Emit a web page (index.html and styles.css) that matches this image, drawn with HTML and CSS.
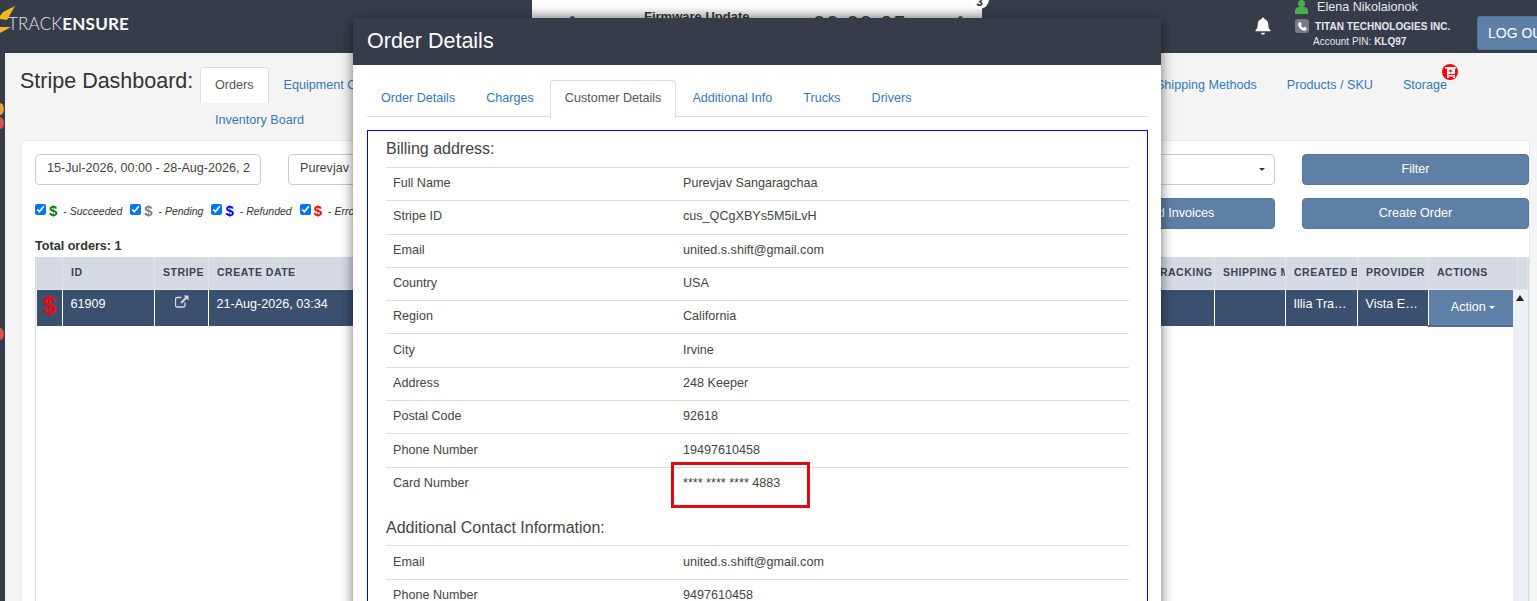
FILE: index.html
```html
<!DOCTYPE html>
<html lang="en">
<head>
    <meta charset="UTF-8">
    <title>Stripe Dashboard</title>
    <link rel="stylesheet" href="styles.css">
</head>
<body>
    <header class="topbar">
        <div class="logo">
            <svg class="logo-mark" width="16" height="34" viewBox="0 0 16 34"><path d="M15 0 L3 6 L0 10 L0 13 L7 14 Z" fill="#f5b81e"/><path d="M0 21 L11 21 L0 27 Z" fill="#f5b81e"/></svg>
            <span class="logo-text"><span class="logo-light">TRACK</span><b>ENSURE</b></span>
        </div>
        <div class="topbar-right">
            <svg class="bell" width="18" height="18" viewBox="0 0 18 18"><path d="M9 0.5a1.5 1.5 0 0 1 1.4 1.6c2.6.6 3.9 2.8 3.9 5.6 0 3 .8 4.300 2.200 5.600v1H1.500v-1c1.400-1.300 2.200-2.600 2.200-5.600 0-2.800 1.300-5 3.900-5.600A1.500 1.500 0 0 1 9 .5z" fill="#fff"/><path d="M7 15.700h4a2 2 0 0 1-4 0z" fill="#fff"/></svg>
            <div class="user">
                <div class="user-name">
                    <svg width="13" height="14" viewBox="0 0 13 14"><circle cx="6.500" cy="3.500" r="3.500" fill="#4cae4c"/><path d="M0 14v-3c0-2.500 2-4 3.500-4h6c1.500 0 3.500 1.500 3.500 4v3z" fill="#4cae4c"/></svg>
                    <span>Elena Nikolaionok</span>
                </div>
                <div class="user-company">
                    <span class="phone-icon"><svg width="9" height="9" viewBox="0 0 9 9"><path d="M1 .5 2.600 0l1.200 2.400-1 .8c.4 1.200 1.300 2.100 2.500 2.600l.9-1L8.800 6 8.300 7.800C7.800 8.600 7 9 6 8.800 3.200 8.200.8 5.800.2 3 0 2 .3 1.100 1 .5z" fill="#fff"/></svg></span>
                    <span>TITAN TECHNOLOGIES INC.</span>
                </div>
                <div class="user-pin">Account PIN: <b>KLQ97</b></div>
            </div>
            <button class="logout">LOG OUT</button>
        </div>
    </header>

    <!-- popup peeking out behind the modal -->
    <div class="firmware">
        <span class="firmware-mark mark-left"></span>
        <span class="firmware-title">Firmware Update</span>
        <span class="firmware-timer">00:00:05</span>
        <span class="firmware-mark mark-right"></span>
    </div>
    <span class="firmware-badge">3</span>

    <span class="side-dot dot-orange"></span>
    <span class="side-dot dot-red"></span>
    <span class="side-dot dot-red2"></span>

    <main class="content">
        <div class="title-row">
            <h1 class="page-title">Stripe Dashboard:</h1>
            <div class="tabs">
                <div class="tab-row">
                    <a class="tab active">Orders</a>
                    <a class="tab">Equipment Orders</a>
                    <a class="tab push">Shipping Methods</a>
                    <a class="tab">Products / SKU</a>
                    <a class="tab tab-storage">Storage
                        <span class="cart-badge"><svg width="11" height="11" viewBox="0 0 11 11"><path d="M0 0h11v1.500h-1V7H3.500v1H10v1.500H2V1.500H0z" fill="#fff"/><path d="M5 2.500h1v1h1.500v1H6v1H5v-1H3.500v-1H5z" fill="#f00"/><rect x="2" y="9.500" width="2" height="1.500" fill="#fff"/><rect x="8" y="9.500" width="2" height="1.500" fill="#fff"/></svg></span>
                    </a>
                </div>
                <div class="tab-row">
                    <a class="tab">Inventory Board</a>
                </div>
            </div>
        </div>

        <section class="panel">
            <div class="filter-row">
                <div class="field date-field">15-Jul-2026, 00:00 - 28-Aug-2026, 2</div>
                <div class="field select-field">Purevjav<span class="caret"></span></div>
                <button class="btn btn-side">Filter</button>
            </div>
            <div class="filter-row second">
                <div class="legend">
                    <label><input type="checkbox" checked><b class="usd green">$</b> - <i>Succeeded</i></label>
                    <label><input type="checkbox" checked><b class="usd grey">$</b> - <i>Pending</i></label>
                    <label><input type="checkbox" checked><b class="usd blue">$</b> - <i>Refunded</i></label>
                    <label><input type="checkbox" checked><b class="usd red">$</b> - <i>Error</i></label>
                </div>
                <button class="btn btn-side">Download Invoices</button>
                <button class="btn btn-side">Create Order</button>
            </div>

            <div class="total">Total orders: 1</div>

            <div class="orders">
                <table class="orders-table">
                    <colgroup>
                        <col class="c-flag"><col class="c-id"><col class="c-stripe"><col>
                        <col class="c-track"><col class="c-ship"><col class="c-by"><col class="c-prov"><col class="c-act"><col class="c-end">
                    </colgroup>
                    <thead>
                        <tr>
                            <th></th><th>ID</th><th>Stripe</th><th>Create date</th><th>Tracking</th>
                            <th>Shipping Method</th><th>Created By</th><th>Provider</th><th>Actions</th><th></th>
                        </tr>
                    </thead>
                    <tbody>
                        <tr>
                            <td class="flag">$</td>
                            <td>61909</td>
                            <td class="ext">
                                <svg width="14" height="13" viewBox="0 0 14 13"><path d="M10 7.500V10.500a1.500 1.500 0 0 1-1.500 1.500H2a1.500 1.500 0 0 1-1.500-1.500V4A1.500 1.500 0 0 1 2 2.500h4.500" fill="none" stroke="#d6dbe3" stroke-width="1.300"/><path d="M8.500 0.500h5v5l-1.800-1.800-5 5-1.400-1.400 5-5z" fill="#d6dbe3"/></svg>
                            </td>
                            <td>21-Aug-2026, 03:34</td>
                            <td></td>
                            <td></td>
                            <td>Illia Trainer</td>
                            <td>Vista Express</td>
                            <td class="action-cell"><button class="action-btn">Action <span class="caret white"></span></button></td>
                            <td class="scroll-cell"></td>
                        </tr>
                    </tbody>
                </table>
                <div class="scrollbar"><span class="scroll-up"></span></div>
            </div>
        </section>
    </main>

    <div class="modal">
        <div class="modal-head">Order Details</div>
        <div class="modal-body">
            <div class="modal-tabs">
                <a class="mtab">Order Details</a>
                <a class="mtab">Charges</a>
                <a class="mtab active">Customer Details</a>
                <a class="mtab">Additional Info</a>
                <a class="mtab">Trucks</a>
                <a class="mtab">Drivers</a>
            </div>
            <div class="customer">
                <h4>Billing address:</h4>
                <table class="info">
                    <tr><td>Full Name</td><td>Purevjav Sangaragchaa</td></tr>
                    <tr><td>Stripe ID</td><td>cus_QCgXBYs5M5iLvH</td></tr>
                    <tr><td>Email</td><td>united.s.shift@gmail.com</td></tr>
                    <tr><td>Country</td><td>USA</td></tr>
                    <tr><td>Region</td><td>California</td></tr>
                    <tr><td>City</td><td>Irvine</td></tr>
                    <tr><td>Address</td><td>248 Keeper</td></tr>
                    <tr><td>Postal Code</td><td>92618</td></tr>
                    <tr><td>Phone Number</td><td>19497610458</td></tr>
                    <tr><td>Card Number</td><td class="card-cell">**** **** **** 4883<span class="red-box"></span></td></tr>
                </table>
                <h4 class="second-title">Additional Contact Information:</h4>
                <table class="info">
                    <tr><td>Email</td><td>united.s.shift@gmail.com</td></tr>
                    <tr><td>Phone Number</td><td>9497610458</td></tr>
                </table>
            </div>
        </div>
    </div>
</body>
</html>
```

FILE: styles.css
```css
html, body { height: 100%; overflow: hidden; }
body { margin: 0; background: #363c4a; color: #333; font-family: "Liberation Sans", Arial, sans-serif; font-size: 12.600px; position: relative; }
a { color: #337ab7; }

/* top bar */
.topbar { height: 53px; display: flex; justify-content: space-between; background: #363c4a; }
.logo { display: flex; align-items: flex-start; }
.logo-mark { margin-top: 6px; flex: none; }
.logo-text { margin: 14px 0 0 -8px; font-family: Lato, "Open Sans", sans-serif; font-size: 17px; line-height: 20px; color: #fff; letter-spacing: 0.200px; }
.logo-light { font-weight: 300; color: #e4e6ea; }
.logo-text b { font-weight: 700; }
.topbar-right { display: flex; align-items: flex-start; width: 283px; }
.bell { margin: 17px 0 0 0; flex: none; }
.user { width: 182px; flex: none; margin-left: 23px; color: #fff; }
.user-name { display: flex; align-items: center; gap: 9px; height: 14px; font-size: 12.600px; color: #e6e8eb; }
.user-company { display: flex; align-items: center; gap: 6px; margin-top: 5px; height: 14px; font-size: 10px; font-weight: 700; letter-spacing: 0.050px; color: #e6e8eb; }
.phone-icon { width: 14px; height: 14px; border-radius: 3px; background: #777c85; display: flex; align-items: center; justify-content: center; flex: none; }
.user-pin { margin: 2px 0 0 18px; font-size: 10px; line-height: 14px; color: #e6e8eb; }
.logout { margin: 16px 0 0 0; flex: none; width: 80px; height: 34px; background: #5f80a6; border: 1px solid #56759a; border-radius: 3px; color: #fff; font: 14px "Liberation Sans", Arial, sans-serif; text-align: left; padding-left: 10px; white-space: nowrap; }

/* firmware popup */
.firmware { position: absolute; top: 0; left: 532px; width: 450px; height: 18px; overflow: hidden; background: linear-gradient(#fff, #fafafa 40%, #d0d0d0); z-index: 2; }
.firmware-title { position: absolute; left: 112px; top: 9px; font-size: 13px; font-weight: 700; color: #333; }
.firmware-timer { position: absolute; left: 281px; top: 11px; font-size: 22px; letter-spacing: 1px; color: #333; }
.firmware-mark { position: absolute; top: 16px; width: 5px; height: 5px; border-radius: 50%; background: #4a4f5c; }
.mark-left { left: 38px; }
.mark-right { left: 426px; }
.firmware-badge { position: absolute; left: 970px; top: -10px; width: 19px; height: 19px; border-radius: 50%; background: #fff; font-size: 12px; font-weight: 700; line-height: 24px; text-align: center; z-index: 3; }

.side-dot { position: absolute; left: -4px; width: 8px; height: 12px; border-radius: 50%; z-index: 3; }
.dot-orange { top: 103px; background: #f0a030; }
.dot-red { top: 117px; background: #d9534f; }
.dot-red2 { top: 328px; background: #d9534f; }

/* main area */
.content { margin-left: 5px; height: 548px; background: #f4f4f4; padding: 14px 7px 0 15px; box-sizing: border-box; }
.title-row { display: flex; align-items: flex-start; }
.page-title { margin: 0; width: 180px; flex: none; font-size: 21.500px; font-weight: 400; line-height: 28px; }
.tabs { flex: 1; height: 73px; padding-right: 68px; }
.tab-row { display: flex; height: 36px; }
.tab { padding: 8px 14px 9px; line-height: 18px; white-space: nowrap; border: 1px solid transparent; border-bottom: 0; }
.tab.active { background: #fff; color: #555; border-color: #ddd; border-radius: 4px 4px 0 0; }
.tab.push { margin-left: auto; }
.tab-row + .tab-row .tab { padding-top: 7px; }
.tab-storage { position: relative; }
.cart-badge { position: absolute; right: 3px; top: -4px; width: 16px; height: 16px; border-radius: 50%; background: #f00; display: flex; align-items: center; justify-content: center; }

.panel { margin-left: 1px; height: 470px; background: #fff; border: 1px solid #e6e9ee; border-radius: 4px 4px 0 0; padding: 13px 0 0 13px; }
.filter-row { display: flex; gap: 27px; height: 31px; }
.filter-row.second { margin-top: 13px; }
.field { box-sizing: border-box; height: 31px; border: 1px solid #ccc; border-radius: 4px; padding: 0 11px; line-height: 27px; white-space: nowrap; overflow: hidden; color: #444; }
.date-field { width: 226px; flex: none; }
.select-field { flex: 1; position: relative; }
.select-field .caret { position: absolute; right: 9px; top: 13px; }
.caret { display: inline-block; border-top: 3px solid #333; border-left: 3px solid transparent; border-right: 3px solid transparent; vertical-align: middle; }
.caret.white { border-top-color: #fff; }
.btn { height: 31px; box-sizing: border-box; padding-bottom: 3px; background: #5f80a6; border: 1px solid #56759a; border-radius: 4px; color: #fff; font: 12.600px "Liberation Sans", Arial, sans-serif; }
.btn-side { width: 227px; flex: none; }
.legend { flex: 1; display: flex; align-items: center; gap: 8px; padding-bottom: 6px; font-size: 10.500px; }
.legend label { display: flex; align-items: center; white-space: pre; }
.legend input { margin: 0 3px 2px 0; width: 11px; height: 11px; }
.usd { font-size: 15px; margin-right: 3px; }
.green { color: #008000; }
.grey { color: #808080; }
.blue { color: #0000ff; }
.red { color: #ff0000; }
.total { margin-top: 9px; height: 19px; font-size: 12.600px; font-weight: 700; line-height: 16px; }

.orders { position: relative; width: 1494px; height: 400px; border-right: 1px solid #d6dae2; border-left: 1px solid #d6dae2; box-sizing: border-box; }
.orders-table { width: 100%; table-layout: fixed; border-collapse: collapse; }
.c-flag { width: 26px; }
.c-id { width: 92px; }
.c-stripe { width: 54px; }
.c-track { width: 70px; }
.c-ship { width: 71px; }
.c-by { width: 72px; }
.c-prov { width: 71px; }
.c-act { width: 89px; }
.c-end { width: 10px; }
.orders-table th { height: 32px; box-sizing: border-box; padding: 0 7px 2px 8px; background: #d6dae2; border: 1px solid #e2e4e8; border-top: 0; text-align: left; font-size: 10.500px; letter-spacing: 0.500px; text-transform: uppercase; color: #3c4354; white-space: nowrap; overflow: hidden; }
.orders-table td { height: 37px; box-sizing: border-box; padding: 0 8px 8px 7.500px; line-height: 18px; background: #3b4f6e; border: 1px solid #fff; color: #fff; font-size: 12.600px; white-space: nowrap; overflow: hidden; text-overflow: ellipsis; }
.orders-table td.flag { padding: 0 0 4px; text-align: center; color: #ff0000; font-size: 24px; font-weight: 700; line-height: 24px; }
.orders-table td.ext { text-align: center; padding-left: 0; padding-right: 0; }
.orders-table td.action-cell { padding: 0; background: #5f80a6; border-bottom: 2px solid #4d6b8e; text-align: center; }
.orders-table td.scroll-cell { padding: 0; background: #fff; border: 0; }
.action-btn { background: none; border: 0; padding: 0; color: #fff; font: 12.600px "Liberation Sans", Arial, sans-serif; }
.scrollbar { position: absolute; right: 0; top: 33px; width: 15px; bottom: 0; background: #eceff3; }
.scroll-up { position: absolute; left: 3px; top: 5px; border-bottom: 6px solid #222; border-left: 4px solid transparent; border-right: 4px solid transparent; }

/* modal */
.modal { position: absolute; top: 18px; left: 353px; width: 808px; height: 640px; background: #fff; box-shadow: 0 3px 12px rgba(0, 0, 0, 0.55); z-index: 5; }
.modal-head { height: 47px; padding-left: 14px; background: #363c4a; color: #fff; font-size: 21.500px; line-height: 46px; }
.modal-body { padding: 15px 13px 0 14px; }
.modal-tabs { display: flex; height: 36px; border-bottom: 1px solid #ddd; }
.mtab { padding: 8px 14px 0; height: 28px; line-height: 18px; border: 1px solid transparent; border-bottom: 0; margin-right: 1px; white-space: nowrap; }
.mtab:first-child { margin-left: -1px; }
.mtab.active { background: #fff; height: 29px; color: #555; border-color: #ddd; border-radius: 4px 4px 0 0; }
.customer { margin-top: 13px; border: 1px solid #0000ff; padding: 0 18px; height: 500px; }
.customer h4 { margin: 0; height: 36px; font-size: 16px; font-weight: 400; line-height: 36px; color: #444; }
.customer h4.second-title { height: 36px; margin-top: 9px; line-height: 38px; }
.info { width: 100%; table-layout: fixed; border-collapse: collapse; color: #444; }
.info td { height: 33px; box-sizing: border-box; padding: 6px 7px 8px; line-height: 18px; border-top: 1px solid #ddd; }
.info td:first-child { width: 290px; }
.info tr { height: 33.300px; }
.card-cell { position: relative; }
.red-box { position: absolute; left: -5px; top: -6px; width: 133px; height: 40px; border: 3px solid #dd0a14; }
```
